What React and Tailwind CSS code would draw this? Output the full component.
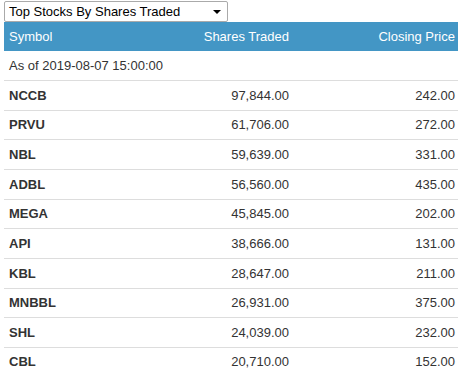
import React from "react";

const rows = [
  { sym: "NCCB", shares: "97,844.00", price: "242.00" },
  { sym: "PRVU", shares: "61,706.00", price: "272.00" },
  { sym: "NBL", shares: "59,639.00", price: "331.00" },
  { sym: "ADBL", shares: "56,560.00", price: "435.00" },
  { sym: "MEGA", shares: "45,845.00", price: "202.00" },
  { sym: "API", shares: "38,666.00", price: "131.00" },
  { sym: "KBL", shares: "28,647.00", price: "211.00" },
  { sym: "MNBBL", shares: "26,931.00", price: "375.00" },
  { sym: "SHL", shares: "24,039.00", price: "232.00" },
  { sym: "CBL", shares: "20,710.00", price: "152.00" },
];

const App = () => {
  return (
    <div className="bg-white w-[461px] h-[373px] overflow-hidden pl-[4px] pr-[3px] pt-[1px] text-[13px] text-[#333] font-['Liberation_Sans',Arial,sans-serif]">
      {/* fake select */}
      <div className="w-[224px] h-[21px] border border-[#aaa] rounded-[2px] bg-white flex items-center justify-between pl-[4px] pr-[6px] text-black">
        <span className="leading-[19px]">Top Stocks By Shares Traded</span>
        <span className="w-0 h-0 border-l-[4px] border-r-[4px] border-t-[4px] border-l-transparent border-r-transparent border-t-black" />
      </div>

      <div className="flex bg-[#4396c5] text-white h-[29px] items-center">
        <div className="w-[120px] pl-[5px]">Symbol</div>
        <div className="w-[165px] text-right">Shares Traded</div>
        <div className="flex-1 text-right pr-[3px]">Closing Price</div>
      </div>

      <div className="h-[29px] flex items-center pl-[5px]">As of 2019-08-07 15:00:00</div>

      {rows.map((r) => (
        <div key={r.sym} className="flex items-center h-[29.67px] border-t border-[#ddd]">
          <div className="w-[120px] pl-[5px] font-bold">{r.sym}</div>
          <div className="w-[165px] text-right">{r.shares}</div>
          <div className="flex-1 text-right pr-[3px]">{r.price}</div>
        </div>
      ))}
    </div>
  );
};

export default App;
